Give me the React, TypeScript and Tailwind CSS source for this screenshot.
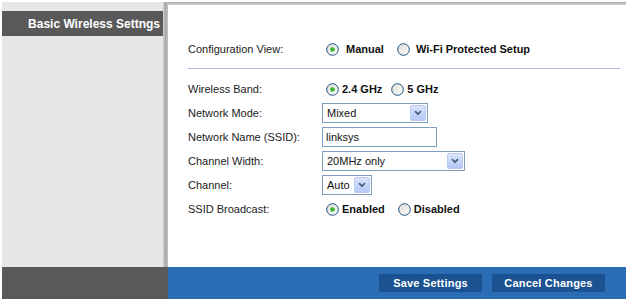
import React from "react";

function Radio({ checked }: { checked?: boolean }) {
  return (
    <svg width="13" height="13" viewBox="0 0 13 13" className="shrink-0">
      <defs>
        <linearGradient id="rg" x1="0" y1="0" x2="1" y2="1">
          <stop offset="0" stopColor="#dcdcd6" />
          <stop offset="1" stopColor="#ffffff" />
        </linearGradient>
      </defs>
      <circle cx="6.5" cy="6.5" r="5.8" fill="url(#rg)" stroke="#1c5180" strokeWidth="1" />
      {checked && <circle cx="6.5" cy="6.5" r="2.3" fill="#3dae3d" />}
      {checked && <circle cx="6.5" cy="6.5" r="1.2" fill="#27c227" />}
    </svg>
  );
}

function Chevron() {
  return (
    <span className="absolute right-[1px] top-[1px] bottom-[1px] w-[16px] flex items-center justify-center bg-gradient-to-b from-[#dbe5fb] to-[#b4c8f5] border border-[#b9cbf3] rounded-[2px]">
      <svg width="8" height="6" viewBox="0 0 8 6">
        <path d="M1 1.2 L4 4.2 L7 1.2" fill="none" stroke="#4d6185" strokeWidth="1.8" />
      </svg>
    </span>
  );
}

function Select({ value, w }: { value: string; w: string }) {
  return (
    <div className={`relative h-[20px] border border-[#7f9db9] bg-white flex items-center pl-[4px] text-[11px] text-[#111] ${w}`}>
      {value}
      <Chevron />
    </div>
  );
}

const label = "w-[134px] shrink-0 text-[11px] text-[#222]";

export default function App() {
  return (
    <div className="w-[628px] h-[302px] bg-white pt-[2px] pl-[2px] font-['Liberation_Sans',Arial,sans-serif]">
      <div className="flex w-[624px] h-[265px]">
        <div className="w-[161px] bg-[#e6e6e6] pt-[9px]">
          <div className="h-[25px] bg-[#595959] flex items-center justify-end pr-[3px] text-white font-bold text-[12px]">
            Basic Wireless Settngs
          </div>
        </div>
        <div className="w-[5px] bg-gradient-to-r from-[#d4d4d4] via-[#a9a9a9] to-[#c4c4c4]" />
        <div className="flex-1 flex flex-col">
          <div className="h-[3px] bg-gradient-to-b from-[#a8a8a8] to-[#d6d6d6]" />
          <div className="pl-[20px] pr-[6px]">
            <div className="mt-[34px] h-[20px] flex items-center">
              <div className={label}>Configuration View:</div>
              <div className="flex items-center ml-[4px]">
                <Radio checked />
                <span className="ml-[7px] font-bold text-[11px] text-[#111]">Manual</span>
                <span className="ml-[13px]"><Radio /></span>
                <span className="ml-[6px] font-bold text-[11px] text-[#111]">Wi-Fi Protected Setup</span>
              </div>
            </div>
            <div className="mt-[9px] h-px bg-[#b3b3e2]" />
            <div className="mt-[10px] flex flex-col gap-[4px]">
              <div className="h-[20px] flex items-center">
                <div className={label}>Wireless Band:</div>
                <div className="flex items-center ml-[4px]">
                  <Radio checked />
                  <span className="ml-[3px] font-bold text-[11px] text-[#111]">2.4 GHz</span>
                  <span className="ml-[9px]"><Radio /></span>
                  <span className="ml-[3px] font-bold text-[11px] text-[#111]">5 GHz</span>
                </div>
              </div>
              <div className="h-[20px] flex items-center">
                <div className={label}>Network Mode:</div>
                <Select value="Mixed" w="w-[106px]" />
              </div>
              <div className="h-[20px] flex items-center">
                <div className={label}>Network Name (SSID):</div>
                <div className="h-[20px] w-[115px] border border-[#7f9db9] bg-white flex items-center pl-[3px] text-[11px] text-[#111]">
                  linksys
                </div>
              </div>
              <div className="h-[20px] flex items-center">
                <div className={label}>Channel Width:</div>
                <Select value="20MHz only" w="w-[143px]" />
              </div>
              <div className="h-[20px] flex items-center">
                <div className={label}>Channel:</div>
                <Select value="Auto" w="w-[50px]" />
              </div>
              <div className="h-[20px] flex items-center">
                <div className={label}>SSID Broadcast:</div>
                <div className="flex items-center ml-[4px]">
                  <Radio checked />
                  <span className="ml-[3px] font-bold text-[11px] text-[#111]">Enabled</span>
                  <span className="ml-[13px]"><Radio /></span>
                  <span className="ml-[3px] font-bold text-[11px] text-[#111]">Disabled</span>
                </div>
              </div>
            </div>
          </div>
        </div>
      </div>
      <div className="flex w-[624px] h-[32px]">
        <div className="w-[166px] bg-[#5a5a5a]" />
        <div className="flex-1 bg-[#2a6db5] flex items-center justify-end pr-[21px] gap-[10px]">
          <div className="w-[103px] h-[18px] bg-[#1a5292] text-white font-bold text-[11px] tracking-[0.2px] flex items-center justify-center">
            Save Settings
          </div>
          <div className="w-[113px] h-[18px] bg-[#1a5292] text-white font-bold text-[11px] tracking-[0.2px] flex items-center justify-center">
            Cancel Changes
          </div>
        </div>
      </div>
    </div>
  );
}
